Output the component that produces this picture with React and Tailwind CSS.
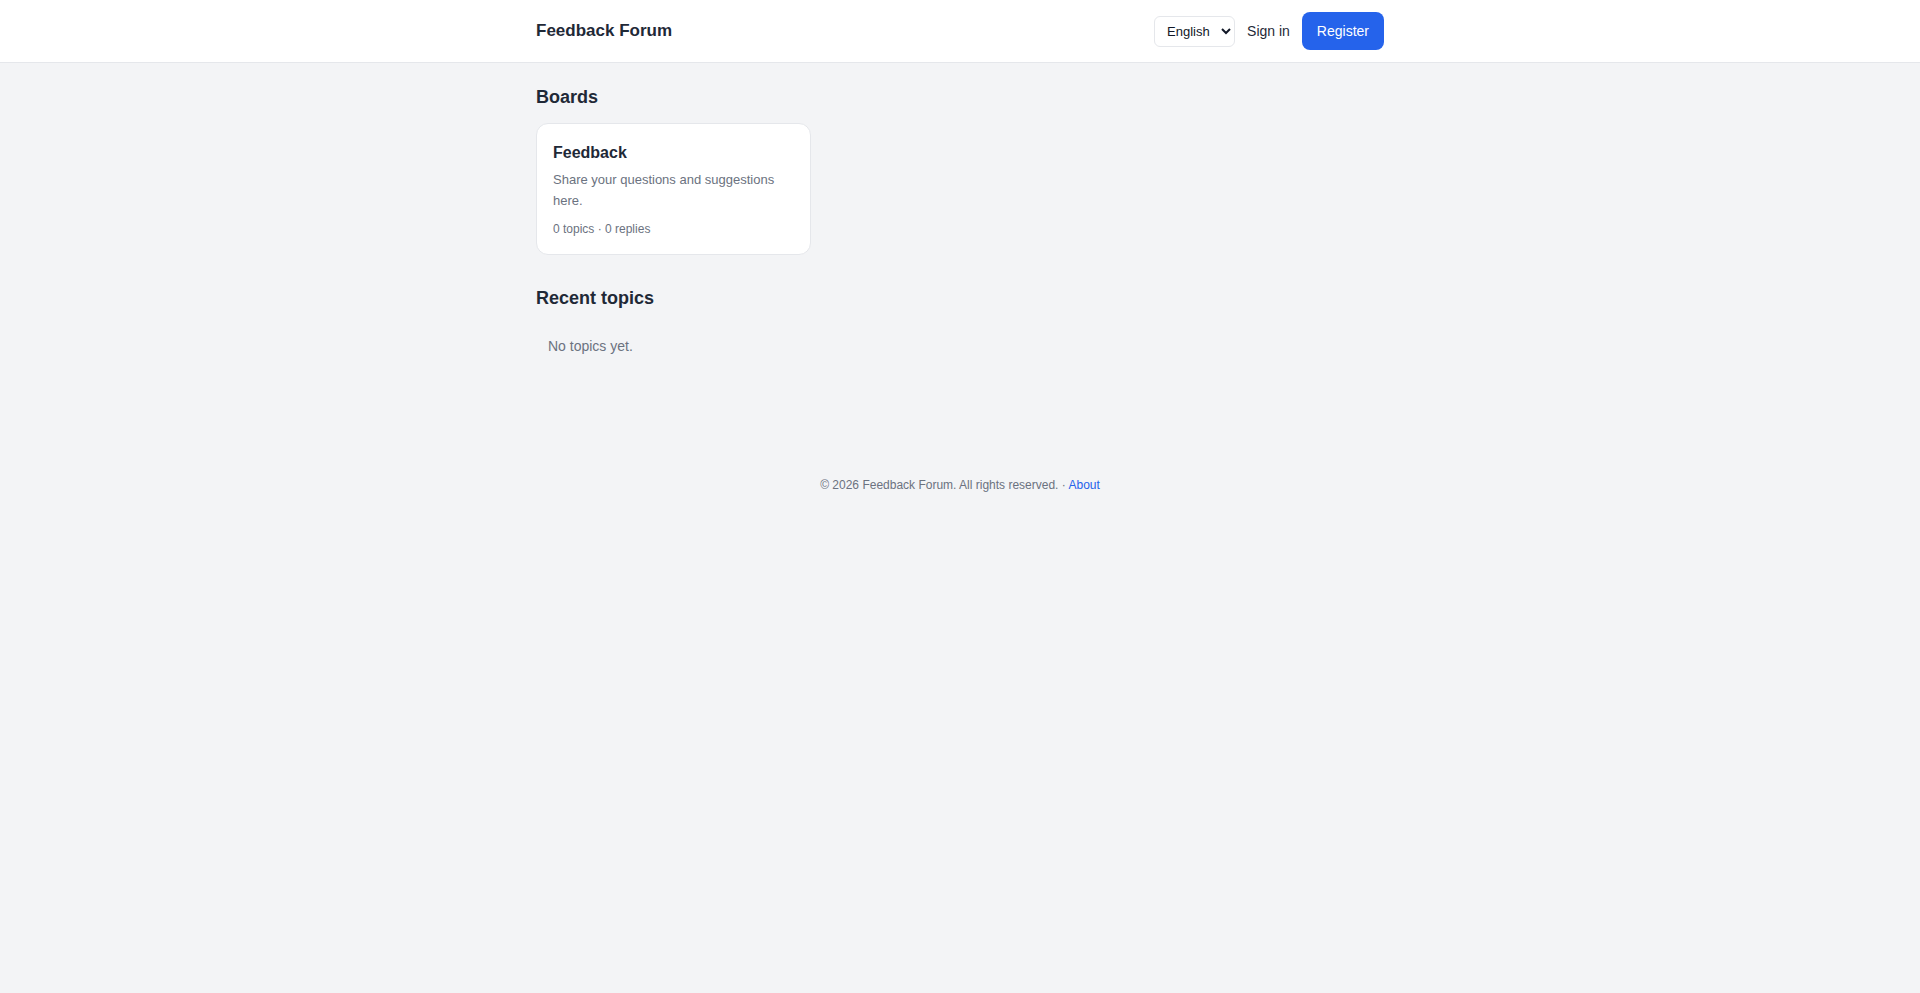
import React from "react";

const App = () => {
  return (
    <div className="min-h-screen bg-[#f3f4f6] text-[#1f2937] font-['Liberation_Sans',Arial,sans-serif]">
      <header className="bg-white border-b border-[#e5e7eb]">
        <div className="max-w-4xl mx-auto px-6 h-[62px] flex items-center justify-between">
          <a href="#" className="text-[17px] font-bold text-[#1f2937]">
            Feedback Forum
          </a>
          <div className="flex items-center gap-3">
            <select className="h-[31px] w-[81px] border border-[#e5e7eb] rounded-md bg-white text-[13px] px-2 text-[#111827]">
              <option>English</option>
            </select>
            <a href="#" className="text-sm text-[#1f2937]">
              Sign in
            </a>
            <button className="bg-[#2563eb] text-white text-sm rounded-lg h-[38px] px-[15px]">
              Register
            </button>
          </div>
        </div>
      </header>

      <main className="max-w-4xl mx-auto px-6 pt-5">
        <h2 className="text-lg leading-7 font-bold text-[#1f2937] mb-3">Boards</h2>
        <div className="grid grid-cols-3 gap-3">
          <a href="#" className="block bg-white border border-[#e5e7eb] rounded-xl px-4 pt-[17px] pb-[17px]">
            <h3 className="text-base leading-6 font-bold text-[#1f2937]">Feedback</h3>
            <p className="text-[13px] leading-[21px] text-[#6b7280] mt-1">
              Share your questions and suggestions here.
            </p>
            <p className="text-xs text-[#6b7280] mt-[10px]">0 topics · 0 replies</p>
          </a>
        </div>

        <h2 className="text-lg leading-7 font-bold text-[#1f2937] mt-[29px]">Recent topics</h2>
        <div className="mt-3 p-3 text-sm leading-5 text-[#6b7280]">No topics yet.</div>
      </main>

      <footer className="mt-[109px] text-center text-xs text-[#6b7280]">
        © 2026 Feedback Forum. All rights reserved. ·{" "}
        <a href="#" className="text-[#2563eb]">
          About
        </a>
      </footer>
    </div>
  );
};

export default App;
